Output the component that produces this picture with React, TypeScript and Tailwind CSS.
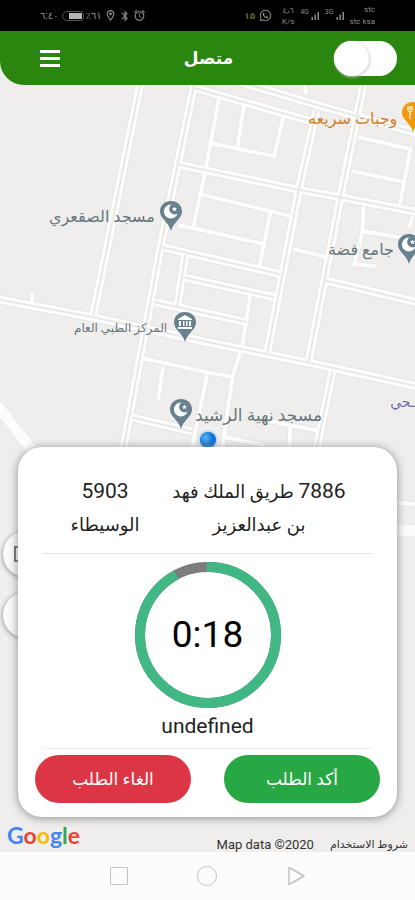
import React from 'react';
import { FaWhatsapp } from 'react-icons/fa';
import { MdAlarm, MdBluetooth, MdOutlineLocationOn, MdSignalCellularAlt } from 'react-icons/md';

const wideRoads = [
    'M140 85L93 317',
    'M194 85L160 250L123 450',
    'M-2 300L93 318L208 343L307 363L417 387',
    'M194 89L310 122',
    'M230 80L320 107L417 134',
    'M176 165L300 191L340 198L417 213',
    'M316 112L299 188L267 353',
    'M363 85L340 198L308 363',
    'M162 248L280 275',
    'M183 278L274 298',
    'M155 303L247 323',
    'M324 281L417 303',
    'M332 372L316 450',
    'M185 256L177 307',
    'M132 418L192 432'
];

const narrowRoads = [
    'M219 98L205 172L193 228',
    'M244 105L237 148',
    'M209 144L274 157L283 117',
    'M357 138L410 150L399 207',
    'M352 172L404 183',
    'M200 195L290 217',
    'M178 226L207 232L264 245',
    'M270 213L259 268',
    'M250 295L242 347',
    'M304 85L306 95',
    'M293 250L327 258',
    'M363 207L362 232L354 265',
    'M362 232L417 241',
    'M412 217L409 228',
    'M143 359L207 373L230 377',
    'M163 367L158 400',
    'M207 375L192 447',
    'M240 353L232 378L222 450',
    'M270 422L317 431',
    'M290 428L289 450',
    'M222 437L265 446',
    'M352 265L375 267',
    'M32 293L32 303',
    'M396 503L417 505'
];

function MapCanvas() {
    return (
        <svg
            className="absolute inset-0 w-full h-full"
            viewBox="0 85 415 767"
            preserveAspectRatio="xMinYMin slice"
            fill="none"
            aria-hidden="true">
            <rect x="0" y="85" width="415" height="767" fill="#efeeed" />
            {wideRoads.map((d) => (
                <path key={d} d={d} stroke="#e6e5e4" strokeWidth="10" />
            ))}
            {narrowRoads.map((d) => (
                <path key={d} d={d} stroke="#e8e7e6" strokeWidth="6" />
            ))}
            {wideRoads.map((d) => (
                <path key={d} d={d} stroke="#fdfdfd" strokeWidth="8" />
            ))}
            {narrowRoads.map((d) => (
                <path key={d} d={d} stroke="#fdfdfd" strokeWidth="4" />
            ))}
            {wideRoads.map((d) => (
                <path key={d} d={d} stroke="#e9e8e7" strokeWidth="2" />
            ))}
            <path d="M-4 404L36 456" stroke="#fdfdfd" strokeWidth="10" />
            <path d="M390 531H417" stroke="#fdfdfd" strokeWidth="10" />
        </svg>
    );
}

function Pin({ kind }: { kind: 'mosque' | 'museum' | 'food' }) {
    return (
        <svg className="block w-6 h-8" viewBox="0 0 24 32" fill="none" aria-hidden="true">
            <path
                d="M12 1C5.500 1 1 5.600 1 11.500C1 19 9 21 12 31C15 21 23 19 23 11.500C23 5.600 18.500 1 12 1Z"
                fill={kind === 'food' ? '#f39a0c' : '#68818e'}
            />
            {kind === 'mosque' && (
                <>
                    <path
                        d="M12.500 4.500A7 7 0 1 0 18.600 13.500A5 5 0 1 1 12.500 4.500Z"
                        fill="#fff"
                    />
                    <path
                        d="M15.500 6.500L16.200 8.100L18 8.300L16.700 9.500L17 11.200L15.500 10.300L14 11.200L14.300 9.500L13 8.300L14.800 8.100Z"
                        fill="#fff"
                    />
                </>
            )}
            {kind === 'museum' && (
                <path
                    d="M5 8L12 4L19 8V9H5ZM6 10H8V15H6ZM10 10H11.500V15H10ZM13 10H14.500V15H13ZM16 10H18V15H16ZM5 16H19V18H5Z"
                    fill="#fff"
                />
            )}
            {kind === 'food' && (
                <path
                    d="M7 5V9M9 5V9M11 5V9M7 9C7 11 11 11 11 9M9 10V18M16 5V18M16 5C14 6 14 11 16 11"
                    stroke="#fff"
                    strokeWidth="1.200"
                />
            )}
        </svg>
    );
}

function MapLabels() {
    return (
        <div className="absolute inset-0 overflow-hidden text-[16px] leading-[20px] text-[#68777e] whitespace-nowrap">
            <span className="absolute left-[308px] top-[25px] text-[#d3812c]">وجبات سريعه</span>
            <span className="absolute left-[401px] top-[17px]">
                <Pin kind="food" />
            </span>
            <span className="absolute left-[49px] top-[123px]">مسجد الصقعري</span>
            <span className="absolute left-[159px] top-[116px]">
                <Pin kind="mosque" />
            </span>
            <span className="absolute left-[328px] top-[156px]">جامع فضة</span>
            <span className="absolute left-[397px] top-[149px]">
                <Pin kind="mosque" />
            </span>
            <span className="absolute left-[74px] top-[234px] text-[12px]">المركز الطبي العام</span>
            <span className="absolute left-[173px] top-[227px]">
                <Pin kind="museum" />
            </span>
            <span className="absolute left-[195px] top-[321px] text-[17px]">مسجد نهية الرشيد</span>
            <span className="absolute left-[169px] top-[314px]">
                <Pin kind="mosque" />
            </span>
            <span className="absolute right-0 top-[308px] text-[14px] text-[#6f6fb0]">ـحي</span>
            <span className="absolute left-[200px] top-[348px] size-4 rounded-full bg-[#1478dc] bg-radial-[at_35%_35%] from-[#5fb4f5] to-[#0f6fd4] to-50% shadow-[0_0_3px_#4aa8ee]" />
        </div>
    );
}

function StatusBar() {
    return (
        <div className="flex items-center h-[31px] bg-black text-[#8c8c8c] text-[10px] leading-[12px]">
            <div className="flex items-center gap-[2px] ml-10">
                <span>٦:٤٠</span>
                <span className="flex justify-end w-[22px] h-[10px] ml-px p-px border border-[#555] rounded-l-md rounded-r-sm">
                    <span className="w-[13px] bg-[#b5b5b5]" />
                </span>
                <span>٪٦١</span>
                <MdOutlineLocationOn size={13} />
                <MdBluetooth size={12} />
                <MdAlarm size={13} />
            </div>
            <div className="flex items-center gap-1 ml-auto mr-10">
                <span className="text-[9px] font-bold text-[#596b20]">١۵</span>
                <FaWhatsapp size={13} />
                <span className="w-4 ml-1 text-[8px] leading-[11px] text-center">
                    ٤٫٦
                    <br />
                    K/s
                </span>
                <span className="flex items-center text-[7px]">
                    <span className="mb-2">4G</span>
                    <MdSignalCellularAlt size={12} />
                </span>
                <span className="flex items-center text-[7px]">
                    <span className="mb-2">3G</span>
                    <MdSignalCellularAlt size={12} />
                </span>
                <span className="text-[8px] leading-[12px] text-right">
                    stc
                    <br />
                    stc ksa
                </span>
            </div>
        </div>
    );
}

function Header() {
    return (
        <header className="relative z-10">
            <div className="grid grid-cols-3 items-center h-[54px] pl-10 pr-[18px] bg-[#2b860f] rounded-bl-[24px]">
                <button type="button" aria-label="القائمة" className="flex flex-col gap-1 w-5">
                    <span className="w-full h-[3px] bg-white" />
                    <span className="w-full h-[3px] bg-white" />
                    <span className="w-full h-[3px] bg-white" />
                </button>
                <h1 className="pr-5 text-center text-[17px] leading-[28px] font-bold text-white">متصل</h1>
                <label className="relative justify-self-end w-[63px] h-[35px] cursor-pointer">
                    <input
                        type="checkbox"
                        aria-label="متصل"
                        className="block w-full h-full appearance-none rounded-full bg-white"
                    />
                    <span className="absolute left-0 top-0 size-[35px] rounded-full bg-white shadow-[1px_1px_3px_#cccccc]" />
                </label>
            </div>
        </header>
    );
}

function OrderCard() {
    return (
        <section
            dir="rtl"
            className="relative mx-[18px] px-[17px] pt-[28px] pb-[14px] rounded-[24px] bg-white text-[#222] shadow-[0_1px_10px_#8a8a8a]">
            <div className="flex justify-end pb-3 mx-[7px] border-b border-[#e4e4e4] text-center text-[18px] leading-[33px]">
                <p className="w-[182px]">
                    <span className="text-[21px]">7886</span> طريق الملك فهد
                    <br />
                    بن عبدالعزيز
                </p>
                <p className="w-[126px]">
                    <span className="text-[21px]">5903</span>
                    <br />
                    الوسيطاء
                </p>
            </div>
            <div className="grid place-items-center mt-2">
                <svg className="col-start-1 row-start-1 size-[146px]" viewBox="0 0 146 146" fill="none">
                    <circle cx="73" cy="73" r="68" stroke="#7d7d7d" strokeWidth="10" />
                    <circle
                        cx="73"
                        cy="73"
                        r="68"
                        stroke="#41b883"
                        strokeWidth="10"
                        pathLength="100"
                        strokeDasharray="92.500 7.500"
                        transform="rotate(-91 73 73)"
                    />
                </svg>
                <time dir="ltr" className="col-start-1 row-start-1 text-[37px] leading-[44px] text-black">
                    0:18
                </time>
            </div>
            <p className="pt-[2px] pb-[6px] mx-[7px] border-b border-[#eeeeee] text-center text-[21px] leading-[32px]">
                undefined
            </p>
            <div className="flex justify-between mt-[6px] text-[17px] text-white">
                <button type="button" className="w-[156px] h-12 pt-[2px] rounded-full bg-[#28a745]">
                    أكد الطلب
                </button>
                <button type="button" className="w-[156px] h-12 pt-[2px] rounded-full bg-[#dc3545]">
                    الغاء الطلب
                </button>
            </div>
        </section>
    );
}

function Attribution() {
    return (
        <div className="relative flex items-center h-[35px] px-[7px] text-[#333]">
            <a href="#google" aria-label="Google" className="font-['Lato'] text-[23px] leading-[28px] font-bold">
                <span className="text-[#4285f4]">G</span>
                <span className="text-[#ea4335]">o</span>
                <span className="text-[#fbbc05]">o</span>
                <span className="text-[#4285f4]">g</span>
                <span className="text-[#34a853]">l</span>
                <span className="text-[#ea4335]">e</span>
            </a>
            <span className="mt-5 ml-auto mr-4 text-[13px] leading-[16px]">Map data ©2020</span>
            <a href="#terms" className="mt-5 text-[11px] leading-[16px]">
                شروط الاستخدام
            </a>
        </div>
    );
}

function NavBar() {
    return (
        <nav className="flex items-center justify-center gap-[69px] h-12 bg-[#fcfcfc] text-[#c2c2c2]">
            <button type="button" aria-label="Recent" className="size-[18px] border border-current rounded-[1px]" />
            <button type="button" aria-label="Home" className="size-5 border border-current rounded-full" />
            <button type="button" aria-label="Back" className="size-5">
                <svg viewBox="0 0 20 20" fill="none" stroke="currentColor" strokeWidth="1.500">
                    <path d="M3 1.500L18 10L3 18.500Z" strokeLinejoin="round" />
                </svg>
            </button>
        </nav>
    );
}

function App() {
    return (
        <div className="flex flex-col min-h-screen bg-[#efeeed] font-['Roboto','DejaVu_Sans',sans-serif]">
            <StatusBar />
            <Header />
            <main className="relative flex flex-col flex-1 justify-end overflow-hidden pt-[361px] -mt-px">
                <MapCanvas />
                <MapLabels />
                <button
                    type="button"
                    aria-label="طبقات"
                    className="absolute left-[3px] bottom-[275px] size-[46px] pl-[11px] rounded-full bg-[#fafafa] shadow-[0_1px_5px_#888888]">
                    <span className="block w-5 h-4 border-2 border-[#666]" />
                </button>
                <button
                    type="button"
                    aria-label="موقعي"
                    className="absolute left-[3px] bottom-[214px] size-[46px] rounded-full bg-[#fafafa] shadow-[0_1px_5px_#888888]"
                />
                <OrderCard />
                <Attribution />
            </main>
            <NavBar />
        </div>
    );
}

export default App;
